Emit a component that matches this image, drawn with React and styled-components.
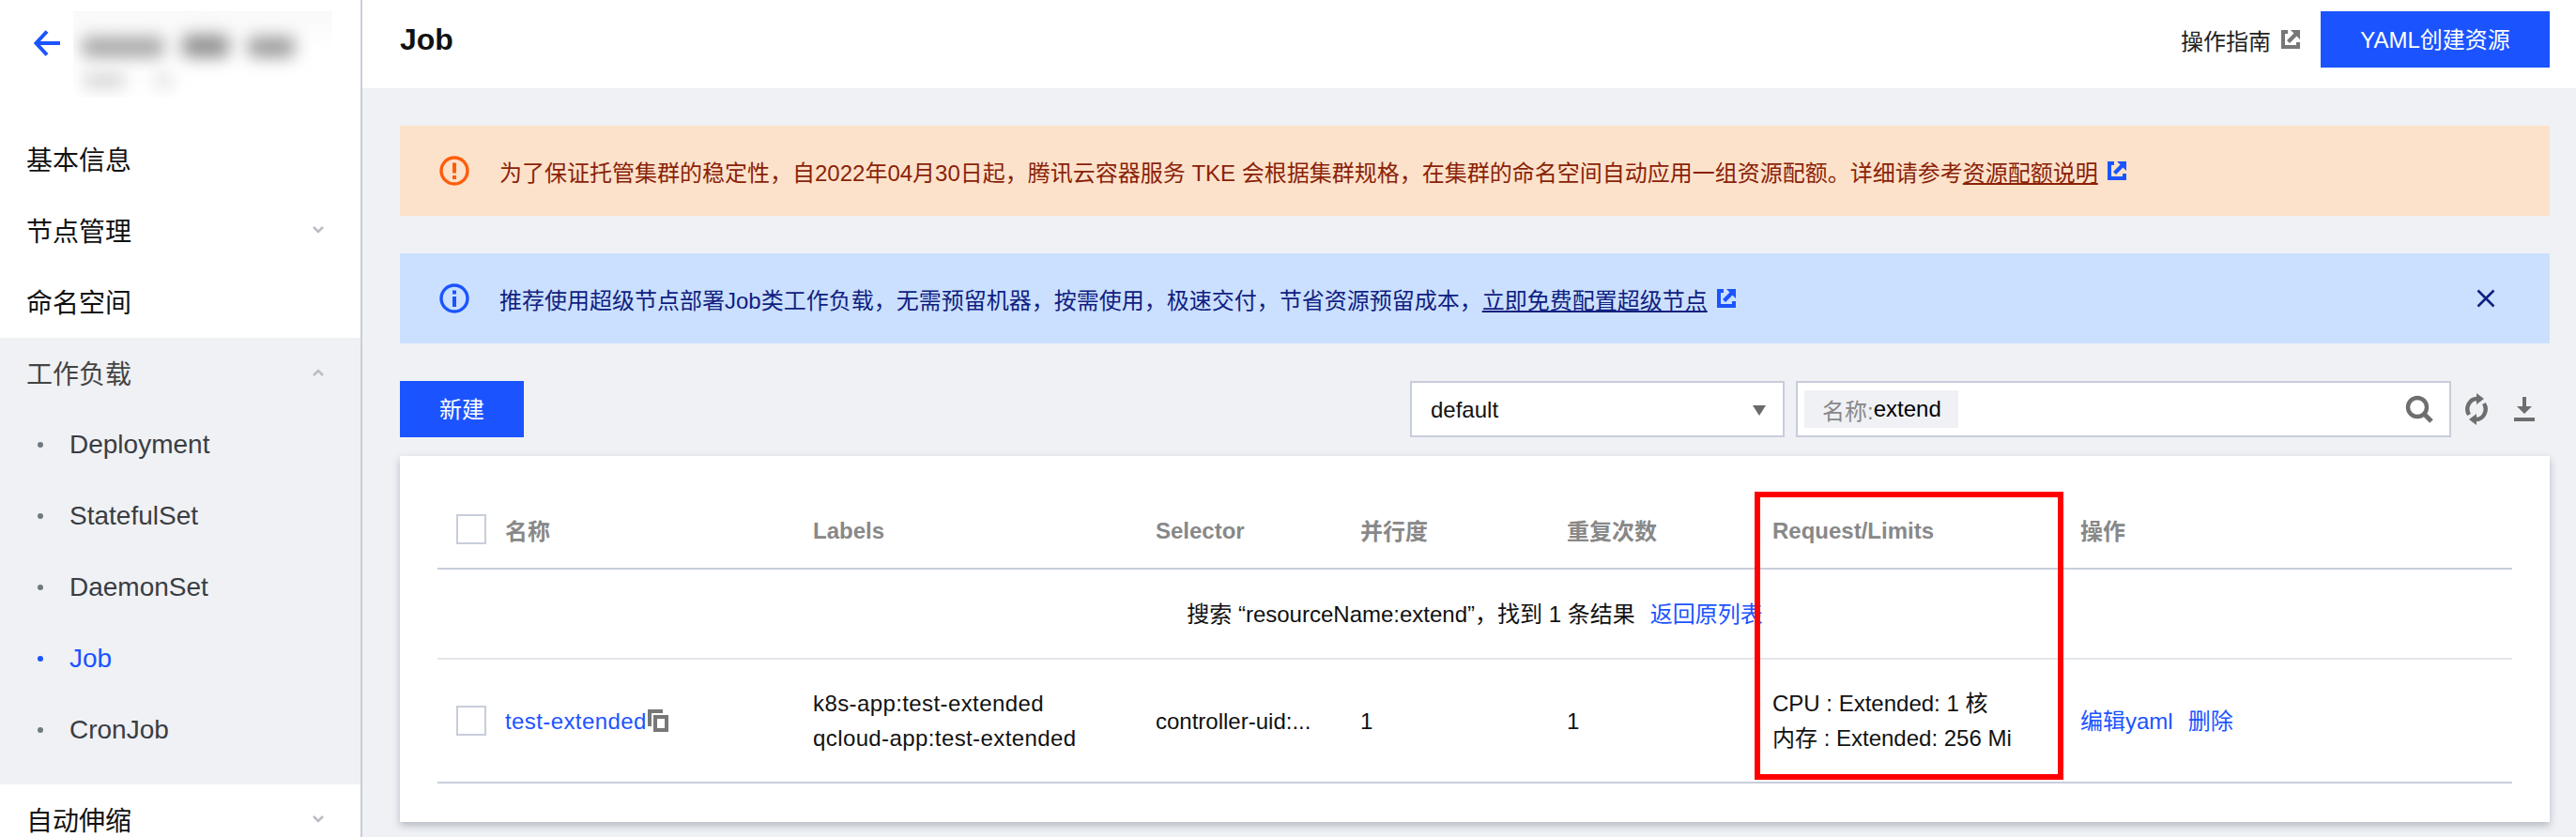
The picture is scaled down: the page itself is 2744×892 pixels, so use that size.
import React from 'react'
import styled, { createGlobalStyle } from 'styled-components'

const Global = createGlobalStyle`
    html, body {
        margin: 0;
        padding: 0;
        height: 892px;
        overflow: hidden;
        background: #eff1f5;
        font-family: "Liberation Sans", "Noto Sans CJK SC", sans-serif;
        color: #000;
    }
    * { box-sizing: border-box; }
`

const Page = styled.div`
    display: flex;
    width: 2744px;
    height: 892px;
    overflow: hidden;
`

const Side = styled.aside`
    width: 386px;
    flex: none;
    height: 892px;
    overflow: hidden;
    background: #fff;
    border-right: 2px solid #c8cddb;
    font-size: 28px;
`
const SideHead = styled.div`
    height: 132px;
    display: flex;
    align-items: flex-start;
    padding: 12px 0 0 36px;
    gap: 14px;
    svg { margin-top: 20px; flex: none; }
`
const Blurred = styled.div`
    width: 276px;
    height: 92px;
    overflow: hidden;
    background: linear-gradient(#f9f9f9, #fff 45%);
    position: relative;
`
const Smudge = styled.div`
    position: absolute;
    left: ${p => p.$x}px;
    top: ${p => p.$y}px;
    width: ${p => p.$w}px;
    height: ${p => p.$h}px;
    background: ${p => p.$c};
    filter: blur(9px);
    border-radius: 6px;
`
const SideItem = styled.div`
    height: 76px;
    display: flex;
    align-items: center;
    justify-content: space-between;
    padding: 0 38px 3px 28px;
    color: ${p => p.$open ? '#444' : '#111'};
`
const SideGroup = styled.div`
    background: #eff1f5;
    padding-bottom: 20px;
`
const SubItem = styled.div`
    height: 76px;
    display: flex;
    align-items: center;
    padding-left: 40px;
    gap: 28px;
    color: ${p => p.$active ? '#1b54ff' : '#3a3d42'};
    &::before {
        content: '';
        width: 6px;
        height: 6px;
        border-radius: 50%;
        background: ${p => p.$active ? '#1b54ff' : '#6f7a80'};
    }
`

const Main = styled.main`
    flex: 1;
    min-width: 0;
`
const Header = styled.header`
    height: 94px;
    background: #fff;
    display: flex;
    align-items: center;
    padding: 0 28px 10px 40px;
`
const Title = styled.h1`
    margin: 0;
    font-size: 32px;
    font-weight: 700;
    color: #111;
    flex: 1;
`
const Guide = styled.a`
    display: flex;
    align-items: center;
    gap: 11px;
    font-size: 24px;
    color: #222;
    margin-right: 22px;
`
const Primary = styled.button`
    height: 60px;
    width: ${p => p.$w}px;
    border: 0;
    padding: 0 0 3px;
    background: #1b54ff;
    color: #fff;
    font: inherit;
    font-size: 24px;
`
const Content = styled.div`
    padding: 40px 28px 0 40px;
`
const Banner = styled.div`
    height: 96px;
    margin-bottom: 40px;
    display: flex;
    align-items: center;
    padding-left: 42px;
    font-size: 24px;
    background: ${p => p.$kind === 'warn' ? '#fde2cb' : '#cbe0ff'};
    color: ${p => p.$kind === 'warn' ? '#8a2208' : '#10207f'};
`
const BannerIcon = styled.svg`
    width: 32px;
    height: 32px;
    flex: none;
    margin-right: 32px;
`
const BannerLink = styled.a`
    color: inherit;
    text-decoration: underline;
`
const ExtIcon = styled.svg`
    width: 20px;
    height: 20px;
    flex: none;
    margin-left: ${p => p.$gap || 0}px;
`
const Close = styled.svg`
    width: 20px;
    height: 20px;
    margin: 0 58px 0 auto;
`

const Toolbar = styled.div`
    height: 60px;
    display: flex;
    align-items: center;
    justify-content: space-between;
    margin-bottom: 20px;
`
const Filters = styled.div`
    display: flex;
    align-items: center;
    padding-right: 16px;
`
const SelectBox = styled.div`
    width: 399px;
    height: 60px;
    background: #fff;
    border: 2px solid #c8cddb;
    display: flex;
    align-items: center;
    justify-content: space-between;
    padding: 2px 18px 0 20px;
    font-size: 24px;
    color: #111;
    &::after {
        content: '';
        border-left: 7px solid transparent;
        border-right: 7px solid transparent;
        border-top: 11px solid #6a6a6a;
    }
`
const SearchBox = styled.div`
    width: 698px;
    height: 60px;
    margin-left: 12px;
    background: #fff;
    border: 2px solid #c8cddb;
    display: flex;
    align-items: center;
    justify-content: space-between;
    padding: 0 17px 0 7px;
`
const Tag = styled.span`
    height: 40px;
    width: 164px;
    padding-left: 19px;
    background: #eff1f5;
    display: flex;
    align-items: center;
    font-size: 24px;
    color: #000;
    em { font-style: normal; color: #888; }
`
const ToolIcon = styled.svg`
    flex: none;
    margin-left: ${p => p.$gap}px;
`

const Card = styled.section`
    position: relative;
    height: 390px;
    padding: 40px;
    background: #fff;
    box-shadow: 0 4px 8px rgba(54, 58, 80, 0.3);
`
const Table = styled.table`
    width: 2210px;
    table-layout: fixed;
    border-collapse: collapse;
    font-size: 24px;
`
const Th = styled.th`
    height: 80px;
    padding: 0 20px ${p => p.$cjk ? '3px' : '0'};
    text-align: left;
    font-weight: 700;
    color: #888;
    border-bottom: 2px solid #c8cddb;
`
const Td = styled.td`
    padding: 0 20px;
    color: #111;
    line-height: 37px;
    white-space: nowrap;
    letter-spacing: ${p => p.$wide ? '0.4px' : '0'};
    border-bottom: 2px solid ${p => p.$soft ? '#e3e6ec' : '#c8cddb'};
`
const SearchRow = styled.tr`
    height: 96px;
    td { text-align: center; }
`
const DataRow = styled.tr`
    height: 132px;
`
const NameCell = styled.div`
    display: flex;
    align-items: center;
`
const Check = styled.span`
    width: 32px;
    height: 32px;
    flex: none;
    border: 2px solid #c8cddb;
    background: #fff;
    margin-right: 20px;
`
const Link = styled.a`
    color: #1b54ff;
    margin-left: ${p => p.$gap || 0}px;
`
const CopyIcon = styled.svg`
    flex: none;
    margin-left: 1px;
`
const Mark = styled.div`
    position: absolute;
    left: 1443px;
    top: 38px;
    width: 329px;
    height: 307px;
    border: 6px solid #ff0000;
`

const Chevron = ({ up }) => (
    <svg width="14" height="10" viewBox="0 0 14 10">
        <path d={up ? 'M2 8 L7 3 L12 8' : 'M2 2 L7 7 L12 2'} fill="none" stroke="#b9bdc4" strokeWidth="2.6" />
    </svg>
)

const Ext = ({ color, gap }) => (
    <ExtIcon viewBox="0 0 20 20" $gap={gap}>
        <path d="M0 0H7V4H4V16H16V13H20V20H0Z" fill={color} />
        <path d="M10 0H20V10L16.5 6.5L9 14L6 11L13.5 3.5Z" fill={color} />
    </ExtIcon>
)

const App = () => (
    <Page>
        <Global />
        <Side>
            <SideHead>
                <svg width="28" height="28" viewBox="0 0 28 28">
                    <path d="M14 1.5 L2.5 14 L14 26.5 M3 14 H28" fill="none" stroke="#1b54ff" strokeWidth="4" />
                </svg>
                <Blurred>
                    <Smudge $x={9} $y={27} $w={88} $h={22} $c="#a6a6a6" />
                    <Smudge $x={116} $y={25} $w={50} $h={24} $c="#8f8f8f" />
                    <Smudge $x={186} $y={27} $w={50} $h={22} $c="#9a9a9a" />
                    <Smudge $x={10} $y={67} $w={46} $h={14} $c="#cfcfcf" />
                    <Smudge $x={86} $y={67} $w={20} $h={14} $c="#dcdcdc" />
                </Blurred>
            </SideHead>
            <SideItem>基本信息</SideItem>
            <SideItem>节点管理<Chevron /></SideItem>
            <SideItem>命名空间</SideItem>
            <SideGroup>
                <SideItem $open>工作负载<Chevron up /></SideItem>
                <SubItem>Deployment</SubItem>
                <SubItem>StatefulSet</SubItem>
                <SubItem>DaemonSet</SubItem>
                <SubItem $active>Job</SubItem>
                <SubItem>CronJob</SubItem>
            </SideGroup>
            <SideItem>自动伸缩<Chevron /></SideItem>
        </Side>
        <Main>
            <Header>
                <Title>Job</Title>
                <Guide>操作指南<Ext color="#777" /></Guide>
                <Primary $w={244}>YAML创建资源</Primary>
            </Header>
            <Content>
                <Banner $kind="warn">
                    <BannerIcon viewBox="0 0 32 32">
                        <circle cx="16" cy="16" r="14" fill="none" stroke="#ff5c0a" strokeWidth="3.4" />
                        <path d="M14 7.5H18V18.5H14ZM14 21H18V25H14Z" fill="#ff5c0a" />
                    </BannerIcon>
                    为了保证托管集群的稳定性，自2022年04月30日起，腾讯云容器服务 TKE 会根据集群规格，在集群的命名空间自动应用一组资源配额。详细请参考
                    <BannerLink>资源配额说明</BannerLink>
                    <Ext color="#1b54ff" gap={10} />
                </Banner>
                <Banner $kind="info">
                    <BannerIcon viewBox="0 0 32 32">
                        <circle cx="16" cy="16" r="14" fill="none" stroke="#1b54ff" strokeWidth="3.4" />
                        <path d="M14 7.5H18V11.5H14ZM14 14H18V25H14Z" fill="#1b54ff" />
                    </BannerIcon>
                    推荐使用超级节点部署Job类工作负载，无需预留机器，按需使用，极速交付，节省资源预留成本，
                    <BannerLink>立即免费配置超级节点</BannerLink>
                    <Ext color="#1b54ff" gap={10} />
                    <Close viewBox="0 0 20 20">
                        <path d="M1.5 1.5 L18.5 18.5 M18.5 1.5 L1.5 18.5" fill="none" stroke="#10207f" strokeWidth="2.6" />
                    </Close>
                </Banner>
                <Toolbar>
                    <Primary $w={132}>新建</Primary>
                    <Filters>
                        <SelectBox>default</SelectBox>
                        <SearchBox>
                            <Tag><em>名称:</em>extend</Tag>
                            <svg width="30" height="30" viewBox="0 0 30 30">
                                <circle cx="13" cy="13" r="10" fill="none" stroke="#6e6e6e" strokeWidth="4.4" />
                                <path d="M20 20 L28 28" stroke="#6e6e6e" strokeWidth="5" />
                            </svg>
                        </SearchBox>
                        <ToolIcon $gap={14} width="26" height="34" viewBox="0 0 26 34">
                            <path d="M5 23 A10 11 0 0 1 14 6 M21 11 A10 11 0 0 1 12 28" fill="none" stroke="#6e6e6e" strokeWidth="4.4" />
                            <path d="M13 0 L21 6 L13 12 Z M13 22 L5 28 L13 34 Z" fill="#6e6e6e" />
                        </ToolIcon>
                        <ToolIcon $gap={27} width="22" height="26" viewBox="0 0 22 26">
                            <path d="M9 0H13V10H19L11 18L3 10H9ZM0 22H22V26H0Z" fill="#6e6e6e" />
                        </ToolIcon>
                    </Filters>
                </Toolbar>
                <Card>
                    <Table>
                        <colgroup>
                            <col width="380" />
                            <col width="365" />
                            <col width="218" />
                            <col width="220" />
                            <col width="219" />
                            <col width="328" />
                            <col width="480" />
                        </colgroup>
                        <thead>
                            <tr>
                                <Th $cjk><NameCell><Check />名称</NameCell></Th>
                                <Th>Labels</Th>
                                <Th>Selector</Th>
                                <Th $cjk>并行度</Th>
                                <Th $cjk>重复次数</Th>
                                <Th>Request/Limits</Th>
                                <Th $cjk>操作</Th>
                            </tr>
                        </thead>
                        <tbody>
                            <SearchRow>
                                <Td colSpan={7} $soft>
                                    搜索 “resourceName:extend”，找到 1 条结果
                                    <Link $gap={16}>返回原列表</Link>
                                </Td>
                            </SearchRow>
                            <DataRow>
                                <Td $wide>
                                    <NameCell>
                                        <Check />
                                        <Link>test-extended</Link>
                                        <CopyIcon width="22" height="24" viewBox="0 0 22 24">
                                            <path d="M0 0H16V4H4V18H0Z" fill="#777" />
                                            <path fillRule="evenodd" d="M6 6H22V24H6ZM10 10V20H18V10Z" fill="#777" />
                                        </CopyIcon>
                                    </NameCell>
                                </Td>
                                <Td $wide>k8s-app:test-extended<br />qcloud-app:test-extended</Td>
                                <Td>controller-uid:...</Td>
                                <Td>1</Td>
                                <Td>1</Td>
                                <Td>CPU : Extended: 1 核<br />内存 : Extended: 256 Mi</Td>
                                <Td>
                                    <Link>编辑yaml</Link>
                                    <Link $gap={16}>删除</Link>
                                </Td>
                            </DataRow>
                        </tbody>
                    </Table>
                    <Mark />
                </Card>
            </Content>
        </Main>
    </Page>
)

export default App
